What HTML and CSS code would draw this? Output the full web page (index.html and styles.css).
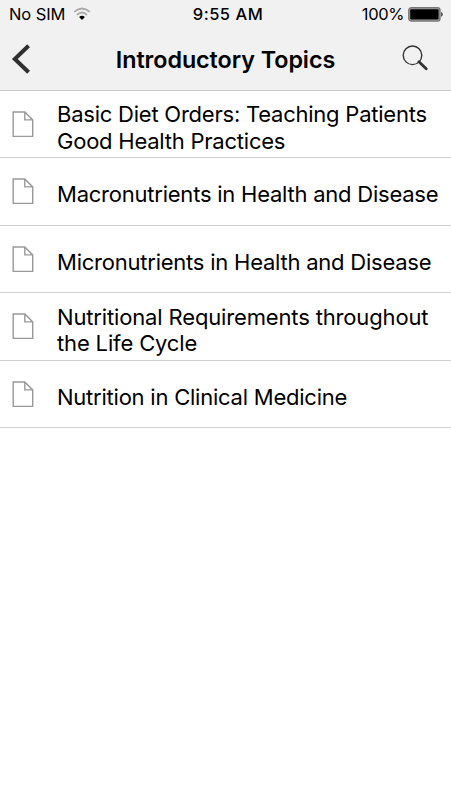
FILE: index.html
```
<!DOCTYPE html>
<html lang="en">
<head>
<meta charset="utf-8">
<meta name="viewport" content="width=device-width, initial-scale=1">
<title>Introductory Topics</title>
<link rel="stylesheet" href="styles.css">
</head>
<body>
<svg class="symbols" aria-hidden="true">
  <symbol id="page" viewBox="0 0 22 27">
    <path d="M1.2 1H12.8L20.7 8.9V25.4H1.2ZM12.8 1V8.9H20.7" fill="none" stroke="#999" stroke-width="1.4"/>
  </symbol>
</svg>
<header class="top">
  <div class="status">
    <div class="carrier"><span class="sim">No SIM</span>
      <svg class="wifi" width="18" height="14" viewBox="0 0 18 14">
        <g fill="none" stroke="#aaa" stroke-width="1.8"><path d="M1.2 4.9Q9-1.8 16.8 4.9"/><path d="M3.9 7.8Q9 3.3 14.1 7.8"/></g>
        <path d="M6.1 10Q9 7.3 11.9 10L9 13Z" fill="#000"/>
      </svg>
    </div>
    <div class="time">9:55 AM</div>
    <div class="power"><span>100%</span>
      <svg width="35" height="15" viewBox="0 0 35 15">
        <rect x=".8" y=".8" width="31.2" height="13.2" rx="2.6" fill="#aaa" stroke="#777" stroke-width="1.4"/>
        <rect x="2.2" y="2.2" width="28.4" height="10.4" rx="1" fill="#000"/>
        <path d="M33 5Q34.8 5.4 34.8 7.4T33 9.8Z" fill="#555"/>
      </svg>
    </div>
  </div>
  <nav class="bar">
    <svg class="back" width="20" height="30" viewBox="0 0 20 30"><path d="M17.6 1.8L3.8 15L17.6 28.2" fill="none" stroke="#303030" stroke-width="4"/></svg>
    <h1>Introductory Topics</h1>
    <svg class="search" width="26" height="26" viewBox="0 0 26 26"><circle cx="10.5" cy="10.3" r="9.3" fill="none" stroke="#333" stroke-width="1.4"/><path d="M17 16.7L24.2 23.8" stroke="#333" stroke-width="2.8" stroke-linecap="round"/></svg>
  </nav>
</header>
<ul class="topics">
  <li><svg class="doc"><use href="#page"/></svg><p class="two">Basic Diet Orders: Teaching Patients<br>Good Health Practices</p></li>
  <li><svg class="doc"><use href="#page"/></svg><p>Macronutrients in Health and Disease</p></li>
  <li><svg class="doc"><use href="#page"/></svg><p>Micronutrients in Health and Disease</p></li>
  <li><svg class="doc"><use href="#page"/></svg><p class="two loose">Nutritional Requirements throughout<br>the Life Cycle</p></li>
  <li><svg class="doc"><use href="#page"/></svg><p>Nutrition in Clinical Medicine</p></li>
</ul>
</body>
</html>
```
FILE: styles.css
```
* { box-sizing: border-box; }
body { margin: 0; background: #fff; color: #000; font-family: Inter, "Liberation Sans", sans-serif; }
.symbols { display: none; }
svg { display: block; flex: none; }
.top { height: 90.6px; background: #f1f1f1; border-bottom: 1px solid #c4c4c4; }
.status { height: 29px; display: grid; grid-template-columns: 1fr auto 1fr; align-items: center; padding: 0 8px 0 9px; font-size: 16.5px; line-height: 29px; white-space: nowrap; }
.carrier, .power { display: flex; align-items: center; }
.carrier { gap: 8px; }
.sim { letter-spacing: -0.1px; }
.wifi { margin-top: -1px; }
.power { justify-content: flex-end; gap: 4px; letter-spacing: -0.4px; }
.time { font-weight: 550; letter-spacing: 0.5px; margin-left: 4px; }
.bar { height: 61px; display: grid; grid-template-columns: 61px 1fr 61px; align-items: center; }
.back { margin: -2px 0 0 11px; }
.bar h1 { margin: 0; font-size: 23.3px; font-weight: 600; line-height: 30px; letter-spacing: -0.05px; text-align: center; white-space: nowrap; }
.search { margin: -4px 0 0 12px; }
.topics { list-style: none; margin: 0; padding: 0; }
.topics li { display: flex; align-items: center; height: 67.5px; border-bottom: 1px solid #d0d0d0; padding-left: 12px; }
.doc { width: 22px; height: 27px; margin: 1px 23px 0 0; }
.topics p { margin: 6px 0 0; font-size: 22px; line-height: 26.5px; letter-spacing: -0.23px; white-space: nowrap; }
.topics .two { margin-top: 8px; }
.topics .loose { letter-spacing: -0.15px; }
```
